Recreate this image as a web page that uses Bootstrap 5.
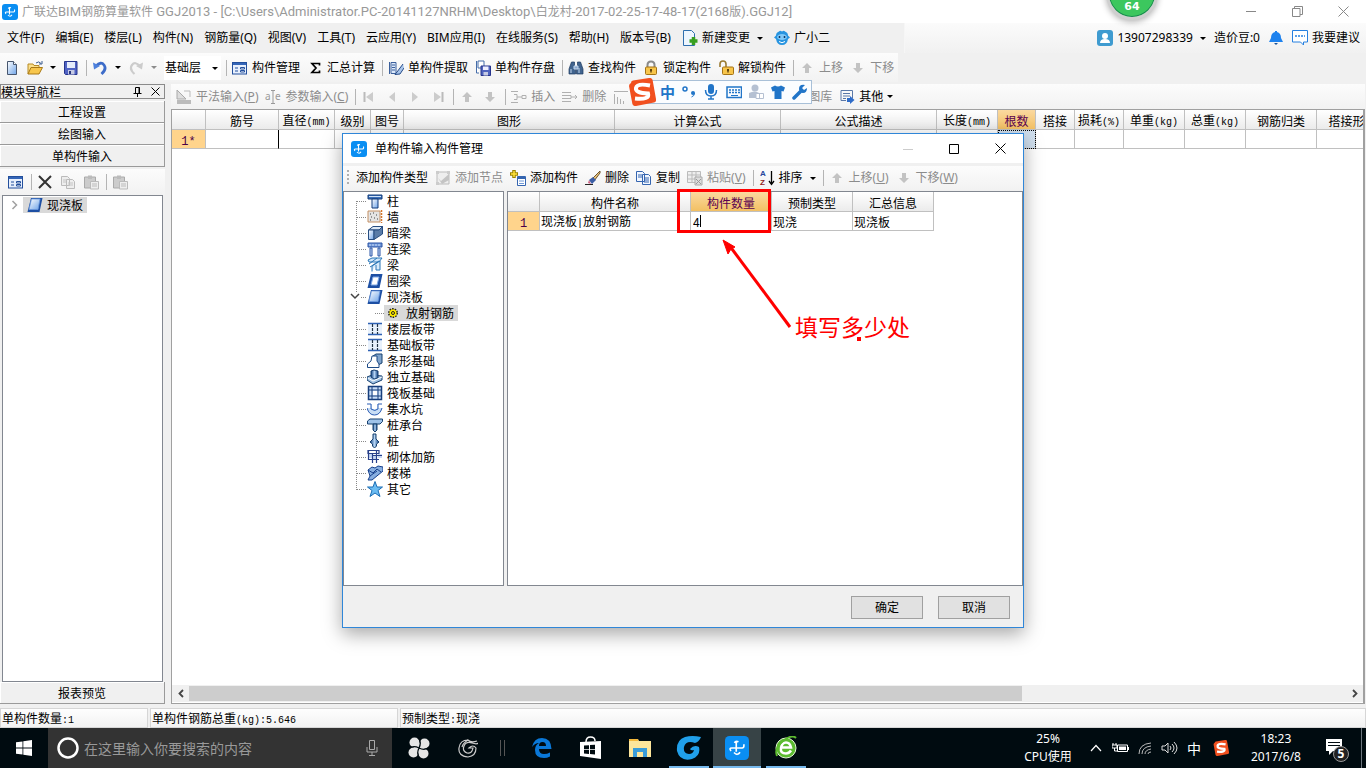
<!DOCTYPE html>
<html lang="zh-CN">
<head>
<meta charset="utf-8">
<meta name="viewport" content="width=device-width, initial-scale=1">
<title>广联达BIM钢筋算量软件 GGJ2013</title>
<link href="https://cdn.jsdelivr.net/npm/bootstrap@5.3.0/dist/css/bootstrap.min.css" rel="stylesheet">
<style>
  body { font: 12px/16px "Noto Sans", "Noto Sans CJK SC", sans-serif; color: #000; background: #f0f0f0; }
  button { font: inherit; color: inherit; line-height: 16px; white-space: nowrap; }
  svg { flex: none; display: block; }
  .i16 { width: 16px; height: 16px; }
  .song { font-family: "Noto Sans CJK SC", sans-serif; }
  .half { font: 10px/12px "Liberation Mono", monospace; }
  .rownum { font: 12px/12px "Liberation Mono", monospace; }
  .tb { display: flex; align-items: center; gap: 4px; border: 0; padding: 0; background: transparent; }
  .tb:disabled { color: #8c8c8c; }
  .caret { width: 0; height: 0; border: 3px solid transparent; border-top-color: currentColor; border-bottom: 0; margin: 0 0 0 3px; }
  .vsep { width: 1px; height: 16px; background: #b4b4b4; margin-right: -2px; flex: none; }
  .toolrow { display: flex; align-items: center; gap: 7px; background: linear-gradient(#fcfcfc, #f2f2f2); }

  .titlebar { height: 23px; background: #fff; color: #999; padding-left: 2px; }
  .titletext { font-size: 12px; line-height: 23px; }
  .titletext span { font: 13px/20px Roboto, sans-serif; }
  .wbtn { width: 46px; height: 23px; border: 0; background: transparent; padding: 0; display: flex; align-items: center; justify-content: center; }
  .menubar { height: 30px; }
  .menus { gap: 11px; padding-left: 7px; }
  .menuright { width: 33.8%; padding-right: 6px; background: linear-gradient(#fbfbfb, #f1f1f1); border-left: 1px solid #f6f6f6; }
  .maintools { height: 29px; }
  .floor { width: 57px; height: 24px; border: 0; border-radius: 0; padding: 0 0 0 1px; font: inherit; appearance: none; background: #fff; }
  .floorwrap { position: relative; margin-right: -2px; }
  .floorwrap .caret { position: absolute; right: 3px; top: 11px; }

  .workarea { min-height: 0; padding-top: 2px; }
  .leftpane { width: 169px; flex: none; }
  .panehead { height: 15px; border: 1px solid #8a8a8a; line-height: 13px; margin-bottom: 2px; }
  .navbtn { display: block; width: 100%; height: 22px; border: 1px solid #9a9a9a; border-width: 0 1px 1px 0; background: #f0f0f0; padding: 0; box-shadow: inset 1px 1px #fff; }
  .panetools { height: 26px; margin-top: 2px; padding-left: 8px; }
  .tree { background: #fff; border: 1px solid #828790; list-style: none; margin: 0; }
  .panetree { margin: 0 2px !important; padding: 1px 0 0 8px; }
  .picked { background: #d9d9d9; }

  .sheetpane { min-width: 0; padding: 0 1px 0 2px; }
  .sheettools { height: 25px; padding-left: 5px; }
  .sheet { border: 1px solid #a0a0a0; border-right-width: 2px; background: #fff; }
  .grid { border-collapse: separate; border-spacing: 0; table-layout: fixed; font-family: "Noto Sans CJK SC", sans-serif; margin: 0; }
  .grid th, .grid td { height: 19px; padding: 0 1px; border-right: 1px solid #c0c0c0; border-bottom: 1px solid #c0c0c0; line-height: 17px; white-space: nowrap; overflow: hidden; font-weight: 400; }
  .grid thead th { height: 20px; padding: 1px 0 0; text-align: center; background: linear-gradient(#fff, #ebebeb); }
  .grid thead th.on { background: linear-gradient(#fbd9a0, #f2c063); color: #5a0050; }
  .grid tbody th { text-align: center; background: #ffd48c; color: #4a0048; }
  .grid td.current { border-right-color: #000; }
  .grid td.focus { outline: 1px dotted #000; outline-offset: -1px; background: #d0dfee; }
  .cellinput { width: 100%; height: 16px; border: 0; padding: 0 1px; font: inherit; display: block; outline: 0; background: linear-gradient(#000, #000) no-repeat 8px 2px / 1px 12px; }
  .hbar { height: 17px; background: #f0f0f0; margin-bottom: 1px; }
  .hbar button { width: 17px; border: 0; background: transparent; padding: 0; display: flex; align-items: center; justify-content: center; }
  .thumb { width: 72%; background: #cdcdcd; height: 15px; }
  .status { gap: 2px; }
  .status > div { height: 20px; border: 1px solid #d6d6d6; background: linear-gradient(#fefefe, #f2f2f2); line-height: 18px; padding-left: 1px; }

  .taskbar { height: 40px; background: #000b10; color: #fff; }
  .taskbar button { border: 0; padding: 0; background: transparent; display: flex; align-items: center; justify-content: center; }
  .tk { width: 49px; height: 40px; }
  .tk.first { width: 48px; margin-left: 3px; }
  .tick { width: 25px; padding-left: 8px; color: #555; }
  .taskbar .live { box-shadow: inset 0 -2px #76b9ed; width: 40px; margin: 0 4px 0 5px; }
  .taskbar .front { background: #374346; box-shadow: inset 0 -2px #76b9ed; width: 48px; margin: 0; }
  .find { width: 344px; background: #333; padding: 0 12px 0 8px; }
  .find input { background: transparent; border: 0; outline: 0; font: 14px/20px "Noto Sans CJK SC", sans-serif; color: #999; padding: 0; min-width: 0; }
  .find input::placeholder { color: #999; opacity: 1; }
  .tray { gap: 8px; }
  .clock { line-height: 18px; text-align: center; }
  .clock.time { margin: 0 24px 0 22px; }
  .imemode { font: 14px/16px "Noto Sans CJK SC", sans-serif; }

  .dlg { position: absolute; left: 50%; top: 133px; width: 682px; height: 495px; margin-left: -341px; background: #f0f0f0; border: 1px solid #2f86d8; box-shadow: 0 6px 18px rgba(0,0,0,.35); }
  .dlgtitle { height: 29px; background: #fff; padding-left: 8px; }
  .dlgtools { height: 24px; margin: 3px 0 1px; padding-left: 4px; }
  .grip { width: 2px; height: 16px; background: repeating-linear-gradient(#b0b0b0 0 2px, transparent 2px 4px); }
  .kinds { width: 161px; padding: 1px 0 0 12px; }
  .kinds li { height: 16px; padding-left: 11px; display: flex; align-items: center; gap: 4px; background: repeating-linear-gradient(#888 0 1px, transparent 1px 2px) no-repeat 0 0 / 1px 16px, repeating-linear-gradient(90deg, #888 0 1px, transparent 1px 2px) no-repeat 1px 8px / 10px 1px; }
  .kinds li:first-child { background-position: 0 8px, 1px 8px; }
  .kinds li:last-child { background-size: 1px 9px, 10px 1px; }
  .kinds li.open { position: relative; }
  .kinds li.open svg.tw { position: absolute; left: -6px; top: 3px; background: #fff; }
  .kinds li.sub { padding-left: 28px; background-position: 0 0, 19px 8px; }
  .kinds li.sub .picked { gap: 6px; }
  .dlgbuttons { height: 41px; gap: 15px; padding: 2px 13px 0 0; }
  .okbtn { width: 72px; height: 23px; border: 1px solid #a0a0a0; background: #e1e1e1; padding: 0; }
  .note { position: absolute; left: 334px; top: 54px; pointer-events: none; }
  .notetext { position: absolute; left: 452px; top: 178px; font: 400 23px/28px "Noto Sans CJK SC", sans-serif; color: #f00; white-space: nowrap; }

  .ime { position: absolute; left: 640px; top: 80px; width: 172px; height: 24px; background: #fbfdff; border: 1px solid #a8c0d8; padding-left: 16px; color: #2175c8; }
  .ime strong { font-size: 15px; }
  .ime .logo { position: absolute; left: -13px; top: -3px; }
  .ball { position: absolute; left: 1106px; top: -32px; width: 52px; height: 52px; border-radius: 50%; background: #3cc75e; border: 3px solid #cfcfcf; box-shadow: inset 0 0 0 1px #16864e, 0 2px 6px rgba(0,0,0,.3); color: #fff; font: bold 11px/14px "DejaVu Sans", sans-serif; text-align: center; padding-top: 29px; }
</style>
</head>
<body class="vh-100 d-flex flex-column overflow-hidden position-relative">
<svg width="0" height="0" class="position-absolute">
  <defs>
    <linearGradient id="bl" x1="0" y1="0" x2="1" y2="1"><stop offset="0" stop-color="#fff"/><stop offset="1" stop-color="#6fa4e8"/></linearGradient>
    <linearGradient id="db" x1="0" y1="0" x2="1" y2="0"><stop offset="0" stop-color="#0e3f80"/><stop offset=".5" stop-color="#b4d4f4"/><stop offset="1" stop-color="#0e3f80"/></linearGradient>
    <symbol id="app" viewBox="0 0 16 16"><rect width="16" height="16" rx="3" fill="#0a8ef2"/><path d="M6.300 4.600Q7 3 9 3.800M7.500 3.500v7M4 10Q2.500 8 4.500 8h7q1.500-.3 1-2.500M6 11q2.300 2.500 4-.2" fill="none" stroke="#fff" stroke-width="1.100"/></symbol>
    <symbol id="new" viewBox="0 0 16 16"><path d="M3.500 1.500h6l3 3v10h-9z" fill="url(#bl)" stroke="#47566e"/><path d="M9.500 1.500v3h3" fill="#fff" stroke="#47566e"/></symbol>
    <symbol id="open" viewBox="0 0 16 16"><path d="M1 14V4h5l1 1.500h5V8" fill="#fbe08c" stroke="#b78a25"/><path d="M1 14l3-6.500h11.500L12 14z" fill="#f7c64c" stroke="#a87917"/><path d="M9 3q3-2.500 5 .5M15 1v3h-3" fill="none" stroke="#3b5c90"/></symbol>
    <symbol id="save" viewBox="0 0 16 16"><path d="M1.500 1.500h12.500v13H2.500l-1-1z" fill="#5063c4" stroke="#26348c"/><path d="M4 2h8v6H4z" fill="#e5ecfb"/><path d="M5 10h6.500v4.500H5z" fill="#c6cbe4"/><path d="M6 11h2v3H6z" fill="#2a377f"/></symbol>
    <symbol id="undo" viewBox="0 0 16 16"><path d="M4 6q5-5 8-1t-2.500 9" fill="none" stroke="#3d6cc9" stroke-width="2.800"/><path d="M1 2.500l1 7 6-3.500z" fill="#4d80dc"/></symbol>
    <symbol id="redo" viewBox="0 0 16 16"><path d="M12 6Q7 1 4 5t2.500 9" fill="none" stroke="#ccc" stroke-width="2.200"/><path d="M15 2.500l-1 7L8 6z" fill="#ccc"/></symbol>
    <symbol id="form" viewBox="0 0 16 16"><rect x=".5" y="2.500" width="14" height="11.500" fill="#e8f0fd" stroke="#234f9c"/><path d="M1 4h13" stroke="#3566b8" stroke-width="2"/><path d="M3 8h3M3 11h3" stroke="#234f9c"/><path d="M8.500 7.500h4v1.500h-4zM8.500 10.500h4V12h-4z" fill="#fff" stroke="#234f9c"/></symbol>
    <symbol id="pick" viewBox="0 0 16 16"><path d="M1.500 2v12M3 2.500h5v11H3z" fill="#dce9fa" stroke="#3b5f9b"/><path d="M4 5h3M4 7.500h3M4 10h3" stroke="#3b5f9b"/><path d="M15 4l-6 8-2 2.500 5-.5 4-6" fill="#a9c5ea" stroke="#254a88"/></symbol>
    <symbol id="store" viewBox="0 0 16 16"><path d="M1.500 1v12H4M3 1h6v7H3z" fill="#fff" stroke="#456da9"/><path d="M6 6h9.500v9.500H6z" fill="#5064bf" stroke="#26348c"/><path d="M8 6.500h5.500V10H8z" fill="#eef"/><path d="M8.500 12h4.500v3.500H8.500z" fill="#c6cbe4"/></symbol>
    <symbol id="binoc" viewBox="0 0 16 16"><path d="M3.500 2h3v4l1 1V14H1V9zM9.500 2h3l2.500 7v5H8.500V7l1-1z" fill="#41648f" stroke="#1d3a60" stroke-width=".7"/><path d="M6 6h4v3H6zM3 9v4M11 8v5" fill="#89a8cf" stroke="#c5d8ee"/></symbol>
    <symbol id="lock" viewBox="0 0 16 16"><path d="M4.500 8V5q0-3.500 3.500-3.500T11.500 5v3" fill="none" stroke="#8b8b8b" stroke-width="2"/><rect x="2.500" y="7" width="11" height="7.500" rx="1" fill="#f8c54a" stroke="#a47315"/><path d="M8 9v3.500M7 10h2" stroke="#53390a" stroke-width="1.300"/></symbol>
    <symbol id="unlock" viewBox="0 0 16 16"><path d="M2 7V4q0-3 3-3t3 3v3" fill="none" stroke="#9a7b33" stroke-width="1.600"/><rect x="4.500" y="7" width="11" height="7.500" rx="1" fill="#f8c54a" stroke="#a47315"/><path d="M10 9v3.500M9 10h2" stroke="#53390a" stroke-width="1.300"/></symbol>
    <symbol id="up" viewBox="0 0 16 16"><path d="M8 3l5 5h-3v5H6V8H3z" fill="#c3c3c3"/></symbol>
    <symbol id="down" viewBox="0 0 16 16"><path d="M8 13L3 8h3V3h4v5h3z" fill="#c3c3c3"/></symbol>
    <symbol id="plate" viewBox="0 0 16 16"><path d="M4 1h11.500L12.500 15H.5z" fill="#1d4fa3"/><path d="M4.500 2h8.500l-2 10.500H2z" fill="url(#bl)" stroke="#6d9be0" stroke-width=".8"/></symbol>
    <symbol id="copyg" viewBox="0 0 16 16"><path d="M1.500 2.500h6l2 2v7h-8zM6.500 5.500h6l2 2v7h-8z" fill="#eee" stroke="#bbb"/><path d="M3 6h4M3 8h3M8 9h5M8 11h5" stroke="#c4c4c4"/></symbol>
    <symbol id="pasteg" viewBox="0 0 16 16"><path d="M1.500 3h11v11h-11z" fill="#ccc" stroke="#aaa"/><path d="M5 1.500h4V5H5z" fill="#bbb"/><path d="M7.500 7.500h8v7.500h-8z" fill="#eee" stroke="#bbb"/><path d="M9 10h5M9 12h5" stroke="#bbb"/></symbol>
    <symbol id="cross" viewBox="0 0 16 16"><path d="M2 2l12 12M14 2L2 14" stroke="#333" stroke-width="2"/></symbol>
    <symbol id="win" viewBox="0 0 16 16"><path d="M0 2.300L6.500 1.400v6.200H0zM7.300 1.300L16 0v7.600H7.300zM0 8.400h6.500v6.200L0 13.700zM7.300 8.400H16V16l-8.700-1.300z" fill="#fff"/></symbol>
    <symbol id="band" viewBox="0 0 16 16"><path d="M1 3h14v10H1z" fill="#e8f1fc"/><path d="M1 2.500h14M1 13.500h14" stroke="#2f62b4" stroke-width="1.500"/><path d="M5.500 3v10M10.500 3v10" stroke="#234" stroke-width="1.200" stroke-dasharray="3 1"/></symbol>
    <symbol id="S" viewBox="0 0 28 28"><path d="M3 5q0-2 2-2.400L21 0q3-.4 3.600 2L28 21q.5 3-2 3.600L8 28q-3 .4-3.600-2L1 8Q1 6 3 5z" fill="#f1501f"/><path d="M22 7.500Q9 5 8 10t12 5.500Q22 22 7 20.500" fill="none" stroke="#fff" stroke-width="4"/></symbol>
  </defs>
</svg>

<header class="titlebar d-flex align-items-center">
  <svg class="i16"><use href="#app"/></svg>
  <div class="titletext ms-1 flex-grow-1 text-nowrap">广联达<span>BIM</span>钢筋算量软件<span> GGJ2013 - [C:\Users\Administrator.PC-20141127NRHM\Desktop\</span>白龙村<span>-2017-02-25-17-48-17(2168</span>版<span>).GGJ12]</span></div>
  <button class="wbtn" aria-label="最小化"><svg width="10" height="10"><path d="M0 4.500h10" stroke="#888"/></svg></button>
  <button class="wbtn" aria-label="还原"><svg width="11" height="11"><path d="M.5 2.500h7.500v8H.5zM2.500 2.500v-2h8v8H8" fill="none" stroke="#888"/></svg></button>
  <button class="wbtn" aria-label="关闭"><svg width="11" height="11"><path d="M.5.5l10 10M10.500.5l-10 10" stroke="#888"/></svg></button>
</header>

<nav class="menubar d-flex">
  <div class="menus d-flex align-items-center flex-grow-1">
    <button class="tb">文件(F)</button><button class="tb">编辑(E)</button><button class="tb">楼层(L)</button><button class="tb">构件(N)</button><button class="tb">钢筋量(Q)</button><button class="tb">视图(V)</button><button class="tb">工具(T)</button><button class="tb">云应用(Y)</button><button class="tb">BIM应用(I)</button><button class="tb">在线服务(S)</button><button class="tb">帮助(H)</button><button class="tb">版本号(B)</button>
    <button class="tb"><svg class="i16"><path d="M1.500.5h8l3 3v12h-11z" fill="#eef6fe" stroke="#2f6fae"/><path d="M11.500 7v8M7.500 11h8" stroke="#38a020" stroke-width="3.500"/></svg>新建变更<span class="caret"></span></button>
    <button class="tb"><svg class="i16"><path d="M8 1.500q2-1.500 3 0 3 1 3 4l2 2-2 1.500q-1 6-6 6T2 9L0 7.500l2-2q0-3 3-4 1-1.500 3 0z" fill="#2794e0"/><ellipse cx="8" cy="7" rx="5" ry="3" fill="#7fc8f8"/><path d="M5.500 6v2M10.500 6v2" stroke="#123a66" stroke-width="1.500"/><path d="M5 11.500q3 2.500 6 0" stroke="#fff" fill="none"/></svg>广小二</button>
  </div>
  <div class="menuright d-flex justify-content-end align-items-center gap-2">
    <button class="tb"><svg class="i16"><rect width="16" height="16" rx="3" fill="#3f9bd0"/><circle cx="8" cy="6" r="3" fill="#fff"/><path d="M3 13q0-4 5-4t5 4z" fill="#fff"/></svg>13907298339<span class="caret"></span></button>
    <button class="tb">造价豆:0</button>
    <button class="tb" aria-label="通知"><svg class="i16"><path d="M7 1h2v1q4 1 4 6l2 4H1l2-4q0-5 4-6z" fill="#1e82ee"/><path d="M6 13h4l-2 2z" fill="#18549e"/></svg></button>
    <button class="tb"><svg class="i16"><path d="M.5.500h15v11.500h-4v3l-3-3h-8z" fill="#fff" stroke="#2680e0"/><path d="M3 6h10" stroke="#2680e0" stroke-width="1.500" stroke-dasharray="2 1"/></svg>我要建议</button>
  </div>
</nav>

<div class="d-flex">
<div class="toolrow maintools ps-1 pe-1">
  <button class="tb" aria-label="新建"><svg class="i16"><use href="#new"/></svg></button>
  <button class="tb" aria-label="打开"><svg class="i16"><use href="#open"/></svg><span class="caret"></span></button>
  <button class="tb" aria-label="保存"><svg class="i16"><use href="#save"/></svg></button>
  <span class="vsep"></span>
  <button class="tb" aria-label="撤销"><svg class="i16"><use href="#undo"/></svg><span class="caret"></span></button>
  <button class="tb" disabled aria-label="恢复"><svg class="i16"><use href="#redo"/></svg><span class="caret"></span></button>
  <span class="floorwrap"><select class="floor" aria-label="楼层"><option>基础层</option></select><span class="caret"></span></span>
  <span class="vsep"></span>
  <button class="tb"><svg class="i16"><use href="#form"/></svg>构件管理</button>
  <button class="tb"><svg class="i16"><path d="M12.500 5.500V3.500H5l4 4.500-4 4.500h7.500v-2" fill="none" stroke="#000" stroke-width="1.700"/></svg>汇总计算</button>
  <span class="vsep"></span>
  <button class="tb"><svg class="i16"><use href="#pick"/></svg>单构件提取</button>
  <button class="tb"><svg class="i16"><use href="#store"/></svg>单构件存盘</button>
  <span class="vsep"></span>
  <button class="tb"><svg class="i16"><use href="#binoc"/></svg>查找构件</button>
  <button class="tb"><svg class="i16"><use href="#lock"/></svg>锁定构件</button>
  <button class="tb"><svg class="i16"><use href="#unlock"/></svg>解锁构件</button>
  <span class="vsep"></span>
  <button class="tb" disabled><svg class="i16"><use href="#up"/></svg>上移</button>
  <button class="tb" disabled><svg class="i16"><use href="#down"/></svg>下移</button>
</div>
</div>

<main class="workarea d-flex flex-grow-1 overflow-hidden">
  <aside class="leftpane d-flex flex-column song pe-1">
    <div class="panehead d-flex align-items-center">
      <span class="flex-grow-1">模块导航栏</span>
      <button class="tb me-2" aria-label="固定"><svg width="10" height="10"><path d="M2.500 6V.5h4V6M6 .5V6M.5 6.500h8M4.500 6.500V10" fill="none" stroke="#000"/></svg></button>
      <button class="tb me-1" aria-label="关闭"><svg width="9" height="9"><path d="M.5.5l8 8M8.500.5l-8 8" stroke="#000"/></svg></button>
    </div>
    <button class="navbtn">工程设置</button>
    <button class="navbtn">绘图输入</button>
    <button class="navbtn">单构件输入</button>
    <div class="toolrow panetools">
      <button class="tb" aria-label="管理"><svg class="i16"><use href="#form"/></svg></button>
      <span class="vsep"></span>
      <button class="tb" aria-label="删除"><svg class="i16"><use href="#cross"/></svg></button>
      <button class="tb" disabled aria-label="复制"><svg class="i16"><use href="#copyg"/></svg></button>
      <button class="tb" disabled aria-label="粘贴"><svg class="i16"><use href="#pasteg"/></svg></button>
      <span class="vsep"></span>
      <button class="tb" disabled aria-label="粘贴全部"><svg class="i16"><use href="#pasteg"/></svg></button>
    </div>
    <ul class="tree panetree flex-grow-1">
      <li class="d-flex align-items-center"><svg width="8" height="10"><path d="M1.500 1l4 4-4 4" fill="none" stroke="#a0a0a0" stroke-width="1.500"/></svg><span class="picked d-flex align-items-center gap-1 ms-1 ps-1 pe-1"><svg class="i16"><use href="#plate"/></svg>现浇板</span></li>
    </ul>
    <button class="navbtn">报表预览</button>
  </aside>

  <section class="sheetpane d-flex flex-column flex-grow-1">
    <div class="toolrow sheettools">
      <button class="tb" disabled><svg class="i16"><path d="M1 1v9h9z" fill="#ddd" stroke="#aaa"/><path d="M1 11h14v4H1z" fill="#bbb"/><path d="M8 2h6v6" fill="none" stroke="#bbb"/></svg><span>平法输入(<u>P</u>)</span></button>
      <button class="tb" disabled><svg class="i16"><text x="0" y="11" font-size="10" fill="#999">a</text><text x="10" y="11" font-size="10" fill="#999">e</text><path d="M6 1.500h4M8 2v12M6 14.500h4" stroke="#999"/></svg><span>参数输入(<u>C</u>)</span></button>
      <span class="vsep"></span>
      <button class="tb" disabled aria-label="首条"><svg class="i16"><path d="M3.500 3v10" stroke="#bbb" stroke-width="2"/><path d="M12 3v10L5 8z" fill="#ccc"/></svg></button>
      <button class="tb" disabled aria-label="上条"><svg class="i16"><path d="M11 3v10L5 8z" fill="#ccc"/></svg></button>
      <button class="tb" disabled aria-label="下条"><svg class="i16"><path d="M5 3v10l6-5z" fill="#ccc"/></svg></button>
      <button class="tb" disabled aria-label="末条"><svg class="i16"><path d="M12.500 3v10" stroke="#bbb" stroke-width="2"/><path d="M4 3v10l7-5z" fill="#ccc"/></svg></button>
      <span class="vsep"></span>
      <button class="tb" disabled aria-label="上移"><svg class="i16"><use href="#up"/></svg></button>
      <button class="tb" disabled aria-label="下移"><svg class="i16"><use href="#down"/></svg></button>
      <span class="vsep"></span>
      <button class="tb" disabled><svg class="i16"><path d="M0 2.500h7M0 13.500h7M3 5.500h3v5H3M6 8h5M11 6.500h4v3h-4z" fill="none" stroke="#b0b0b0"/></svg>插入</button>
      <button class="tb" disabled><svg class="i16"><path d="M0 3.500h9M0 12.500h9M0 6.500h9v3H0M9 8h6M13 6l2 2-2 2" fill="none" stroke="#b0b0b0"/></svg>删除</button>
      <button class="tb" disabled aria-label="缩尺配筋"><svg class="i16"><path d="M1 2.500h14M1.500 5v10M4.500 8v7M7.500 10v5M10.500 12v3" fill="none" stroke="#b0b0b0"/></svg></button>
      <span style="width:165px"></span>
      <button class="tb" disabled>图库</button>
      <button class="tb"><svg class="i16"><path d="M2 1.500h11.500v8M2 1.500v10h5M4 4.500h7M4 7h7M4 9.500h3" fill="none" stroke="#5a78a8"/><path d="M8 9h3V7l4.500 4-4.500 4v-2H8z" fill="#2f6cc8"/></svg>其他<span class="caret m-0"></span></button>
    </div>
    <div class="sheet flex-grow-1 d-flex flex-column overflow-hidden">
      <div class="flex-grow-1 overflow-hidden">
        <table class="grid" style="width:1217px">
          <colgroup><col style="width:34px"><col style="width:73px"><col style="width:56px"><col style="width:36px"><col style="width:33px"><col style="width:211px"><col style="width:166px"><col style="width:156px"><col style="width:61px"><col style="width:38px"><col style="width:39px"><col style="width:49px"><col style="width:61px"><col style="width:61px"><col style="width:71px"><col style="width:72px"></colgroup>
          <thead><tr><th></th><th>筋号</th><th>直径<span class="half">(mm)</span></th><th>级别</th><th>图号</th><th>图形</th><th>计算公式</th><th>公式描述</th><th>长度<span class="half">(mm)</span></th><th class="on">根数</th><th>搭接</th><th>损耗<span class="half">(%)</span></th><th>单重<span class="half">(kg)</span></th><th>总重<span class="half">(kg)</span></th><th>钢筋归类</th><th>搭接形式</th></tr></thead>
          <tbody><tr><th><span class="rownum">1*</span></th><td class="current"></td><td></td><td></td><td></td><td></td><td></td><td></td><td></td><td class="focus"></td><td></td><td></td><td></td><td></td><td></td><td></td></tr></tbody>
        </table>
      </div>
      <div class="hbar d-flex align-items-center">
        <button aria-label="向左"><svg width="8" height="9"><path d="M6 1L2.500 4.500 6 8" fill="none" stroke="#444" stroke-width="1.800"/></svg></button>
        <div class="flex-grow-1"><div class="thumb"></div></div>
        <button aria-label="向右"><svg width="8" height="9"><path d="M2 1l3.500 3.500L2 8" fill="none" stroke="#444" stroke-width="1.800"/></svg></button>
      </div>
    </div>
  </section>
</main>

<footer class="status song d-flex pt-1">
  <div style="width:148px">单构件数量<span class="half">:1</span></div>
  <div style="width:248px">单构件钢筋总重<span class="half">(kg):5.646</span></div>
  <div class="flex-grow-1">预制类型<span class="half">:</span>现浇</div>
</footer>

<div class="taskbar d-flex align-items-stretch">
  <button style="width:48px" aria-label="开始"><svg class="i16"><use href="#win"/></svg></button>
  <div class="find d-flex align-items-center">
    <svg width="24" height="24"><circle cx="12" cy="12" r="9.500" fill="none" stroke="#fff" stroke-width="2.500"/></svg>
    <input class="flex-grow-1 ms-1" type="text" aria-label="搜索" placeholder="在这里输入你要搜索的内容">
    <svg width="16" height="18"><path d="M5.500 1.500h5v9h-5zM3 8v5h10V8M8 13v4M5 16.500h6" fill="none" stroke="#aaa"/></svg>
  </div>
  <button class="tk first" aria-label="浏览器"><svg width="22" height="22"><g fill="#e6e6e6"><circle cx="6.500" cy="5.500" r="5"/><circle cx="16.500" cy="6.500" r="5"/><circle cx="15.500" cy="16.500" r="5"/><circle cx="5.500" cy="15.500" r="5"/><circle cx="11" cy="11" r="5"/></g><path d="M11 11Q14 5 10 0M11 11q6 3 11-1M11 11q-3 6 1 11M11 11q-6-3-11 1" stroke="#000b10" stroke-width="1.300" fill="none"/></svg></button>
  <button class="tk" aria-label="广联达"><svg width="20" height="20"><path d="M19 3Q13 5 10 2 2 2 1 10t9 9q8-1 8-9-3-4-7 0h4q-1 6-6 5-5-2-3-7t8-3 7-1M10 2q-5 3-6 7" fill="none" stroke="#ccc" stroke-width="1.200"/></svg></button>
  <span class="tick align-self-center"><svg width="5" height="16"><path d="M.5 0v16M4.500 0v16" stroke="currentColor"/></svg></span>
  <button class="tk" aria-label="Edge"><svg width="20" height="20"><path d="M0 9Q2 0 10 0q9 0 9.500 11H7q0 5 5 5 3 0 6-1.500v4Q15 20 12 20 3 20 3 12q0-5 4-7Q3 5 0 9zM7 8h7q0-4-3.500-4T7 8z" fill="#0a78d8"/></svg></button>
  <button class="tk" aria-label="应用商店"><svg width="22" height="24"><path d="M0 6l21-1v18L0 20z" fill="#fff"/><path d="M6 6Q6 1 10.500 1T15 5" fill="none" stroke="#fff" stroke-width="1.500"/><path d="M4 9.500l5-.3v4H4zM10 9l5-.3v4.500h-5zM4 14h5v4l-5-.5zM10 14h5v4.600l-5-.5z" fill="#000b10"/></svg></button>
  <button class="tk" aria-label="资源管理器"><svg width="22" height="20"><path d="M0 1h9l1 2h12v16H0z" fill="#fde69b"/><path d="M0 1h9v2H0z" fill="#f4b93c"/><path d="M4 19v-9h14v9h-4v-5H8v5z" fill="#3a9cd8"/></svg></button>
  <button class="tk live" aria-label="广联达云"><svg width="26" height="26"><path d="M25 2q-2 5-6 6-9-3-11 4-1 7 5 7 4 0 5-4-3 1-4-1 4-5 9-2 2 9-7 12-12 3-15-8Q0 5 9 2q7-2 16 0z" fill="#20a0ea"/></svg></button>
  <button class="tk front" aria-label="GGJ2013"><svg width="24" height="24"><use href="#app"/></svg></button>
  <button class="tk live" aria-label="360"><svg width="24" height="24"><circle cx="12" cy="12" r="10" fill="#5cbb30" stroke="#e4f6d8"/><path d="M7 11.500h10q-1-5-5-5t-5 5.500 5 5.500q3 0 5-3" fill="none" stroke="#fff" stroke-width="2.500"/><path d="M3 20Q0 12 9 5T22 2" fill="none" stroke="#5cbb30" stroke-width="2"/></svg></button>
  <div class="flex-grow-1"></div>
  <div class="clock align-self-center me-3">25%<br>CPU使用</div>
  <div class="tray d-flex align-items-center">
    <button aria-label="显示隐藏图标"><svg class="i16"><path d="M3 11l5-5.500 5 5.500" fill="none" stroke="#fff" stroke-width="1.200"/></svg></button>
    <svg width="17" height="16"><path d="M5.500 5h10v6.500h-10z" fill="none" stroke="#fff"/><path d="M7 6.500h7v3.500H7zM16 7h1v3h-1z" fill="#fff"/><path d="M1 3v2M4 3v2M0 5h5v3H0zM2.500 8v3h3" stroke="#fff" fill="none"/></svg>
    <svg class="i16"><g fill="none" stroke="#bbb"><path d="M2 14Q2 4 14 3M5 14Q5 7 14 6M8 14q0-4 6-5M11 14q0-2 3-2"/></g></svg>
    <svg width="18" height="16"><path d="M1 6h3l3-3v10l-3-3H1zM9 6q2 2 0 4M11 4q4 4 0 8M13 2q6 6 0 12" fill="none" stroke="#ddd"/></svg>
    <span class="imemode">中</span>
    <svg class="ms-1 i16"><use href="#S"/></svg>
  </div>
  <div class="clock time align-self-center">18:23<br>2017/6/8</div>
  <button class="me-2" aria-label="通知" style="width:28px"><svg width="28" height="28" class="mt-1"><path d="M1 3h16v12H8l-4 4v-4H1z" fill="#fff"/><path d="M3 6.500h12M3 9.500h12" stroke="#000b10"/><circle cx="16" cy="18" r="7.500" fill="#222" stroke="#999"/><text x="16" y="22" fill="#fff" font-size="12" font-weight="700" text-anchor="middle">5</text></svg></button>
  <div class="border-start border-secondary" style="width:5px"></div>
</div>

<div class="dlg d-flex flex-column" role="dialog" aria-label="单构件输入构件管理">
  <div class="dlgtitle d-flex align-items-center">
    <svg class="i16"><use href="#app"/></svg><span class="ms-1 ps-1 flex-grow-1">单构件输入构件管理</span>
    <button class="wbtn" aria-label="最小化"><svg width="10" height="10"><path d="M0 5.500h10" stroke="#ccc"/></svg></button>
    <button class="wbtn" aria-label="最大化"><svg width="10" height="10"><path d="M.5.500h9v9h-9z" fill="none" stroke="#000"/></svg></button>
    <button class="wbtn" aria-label="关闭"><svg width="11" height="11"><path d="M.5.5l10 10M10.500.5l-10 10" stroke="#000"/></svg></button>
  </div>
  <div class="toolrow dlgtools">
    <span class="grip"></span>
    <button class="tb">添加构件类型</button>
    <button class="tb" disabled><svg class="i16"><path d="M2 2h12v12H2z" fill="#eee" stroke="#bbb"/><path d="M3 8l3 3 8-7v6l-7 4z" fill="#c4c4c4"/><path d="M1 1h3v3H1zM12 1h3v3h-3zM1 12h3v3H1z" fill="#ccc"/></svg>添加节点</button>
    <button class="tb"><svg class="i16"><path d="M4 0v8M0 4h8" stroke="#9a8300" stroke-width="3.500"/><path d="M4 1v6M1 4h6" stroke="#ffe23b" stroke-width="1.500"/><path d="M7.500 6.500h8v9h-8z" fill="#fff" stroke="#3565b0"/><path d="M8 8h7" stroke="#3565b0" stroke-width="2"/><path d="M9 11h5M9 13.500h5" stroke="#6f99d8"/></svg>添加构件</button>
    <button class="tb"><svg class="i16"><path d="M15 1L7 9l2 2 6-8z" fill="#e9c27a" stroke="#6d542b"/><path d="M8 7L4 10l3 4 4-4z" fill="#3c5ea5"/><path d="M4 10l-1 3 3 1z" fill="#d06080"/><path d="M0 14.500h8" stroke="#222"/></svg>删除</button>
    <button class="tb"><svg class="i16"><path d="M.5 1.500h6l2 2v8h-8zM6.500 4.500h6l2 2v8h-8z" fill="#f2f7ff" stroke="#3565b0"/><path d="M2 5h4M2 7h4M8 8h5M8 10h5M8 12h5" stroke="#3565b0"/></svg>复制</button>
    <button class="tb" disabled><svg class="i16"><path d="M.5 1.500h13v11H.5zM.5 5h13M.5 9h13M5 1v11M9 1v11" fill="#eee" stroke="#bbb"/><path d="M8 7h7v8H8z" fill="#ddd" stroke="#aaa"/><path d="M9 9l5 5M14 9l-5 5" stroke="#999"/></svg><span>粘贴(<u>V</u>)</span></button>
    <span class="vsep"></span>
    <button class="tb"><svg class="i16 overflow-visible" font-family="Liberation Sans, sans-serif" font-size="8" font-weight="700"><text x="1" y="6" fill="#26479b">A</text><text x="1" y="15" fill="#8e2222">Z</text><path d="M12.500 1v12M10 11l2.500 3.500L15 11" fill="none" stroke="#000" stroke-width="1.300"/></svg>排序<span class="caret"></span></button>
    <span class="vsep"></span>
    <button class="tb" disabled><svg class="i16"><use href="#up"/></svg><span>上移(<u>U</u>)</span></button>
    <button class="tb" disabled><svg class="i16"><use href="#down"/></svg><span>下移(<u>W</u>)</span></button>
  </div>
  <div class="d-flex flex-grow-1 song" style="gap:3px">
    <ul class="tree kinds">
      <li><svg class="i16"><path d="M1 2h14v4H1z" fill="#3b6fb8" stroke="#123c7a"/><path d="M2 3.500h12" stroke="#cfe2f8"/><path d="M5 6h6v9H5z" fill="url(#bl)" stroke="#123c7a"/></svg>柱</li>
      <li><svg class="i16"><path d="M1 2h12v11H1z" fill="#e4e4e4" stroke="#c49064"/><path d="M3 5h1M6 4h1M9 6h1M4 8h1M7 9h1M10 10h1M3 11h1" stroke="#444"/><path d="M14.500 1v13" stroke="#d2762a" stroke-width="1.500" stroke-dasharray="2 1"/></svg>墙</li>
      <li><svg class="i16"><path d="M1.500 5L6 1.500h9.500L12 5z" fill="#dce8f5" stroke="#274d80"/><path d="M1.500 5H7v9.500H1.500z" fill="url(#bl)" stroke="#274d80"/><path d="M7 5h5l3.500-3.500V9L7 14.500z" fill="#5a7ca8" stroke="#274d80"/></svg>暗梁</li>
      <li><svg class="i16"><path d="M1 2h14v4H1z" fill="#7096d8" stroke="#2b55a6"/><path d="M2 4h12" stroke="#c8dcf8" stroke-dasharray="2 1"/><path d="M3 7h2v8H3zM11 7h2v8h-2z" fill="#cfe0f8" stroke="#2b55a6"/></svg>连梁</li>
      <li><svg class="i16"><path d="M1 3l4-2h10l-3 4H2z" fill="#cfe6fa" stroke="#2b77b6"/><path d="M5 14.500V9L13 4v9H9V8" fill="#d8ebfb" stroke="#2b77b6"/><path d="M2 7l8-6M3 10l9-6" stroke="#2b77b6"/></svg>梁</li>
      <li><svg class="i16"><path d="M4 1h11.500L12.500 15H.5z" fill="#1d4fa3"/><path d="M6 4h6l-2 8H4z" fill="#fff" stroke="#7fa8e4"/></svg>圈梁</li>
      <li class="open"><svg class="tw" width="10" height="9"><path d="M1 2l4 4 4-4" fill="none" stroke="#444" stroke-width="1.500"/></svg><svg class="i16"><use href="#plate"/></svg>现浇板</li>
      <li class="sub"><span class="picked d-flex align-items-center pe-1"><svg class="i16"><circle cx="9" cy="8" r="4" fill="#ffea00" stroke="#222" stroke-width="2" stroke-dasharray="1.500 1"/><circle cx="9" cy="8" r="3.500" fill="#ffea00"/><circle cx="9" cy="8" r="1.500" fill="#ffea00" stroke="#222"/></svg>放射钢筋</span></li>
      <li><svg class="i16"><use href="#band"/></svg>楼层板带</li>
      <li><svg class="i16"><use href="#band"/></svg>基础板带</li>
      <li><svg class="i16"><path d="M6 3l3-2h6v9l-4 2z" fill="#7fa3cc" stroke="#17406f"/><path d="M5 3h5v5l2 3v3.500H.500V11L4 8z" fill="#fff" stroke="#1d4a86"/></svg>条形基础</li>
      <li><svg class="i16"><path d="M0 8l5-2 10 1v4l-9 4-6-4z" fill="#9ec0e2" stroke="#17406f"/><path d="M4 2l3-1 4 1v7l-4 1-3-2z" fill="url(#db)" stroke="#17406f"/><path d="M1 9l5 3 9-4" fill="none" stroke="#fff"/></svg>独立基础</li>
      <li><svg class="i16"><path d="M1.500 1.500h13v13h-13z" fill="#c9def8" stroke="#173e7c" stroke-width="1.500"/><path d="M5 2v12M11 2v12M2 5h12M2 11h12" stroke="#173e7c"/><path d="M6 6h4v4H6z" fill="#fff"/></svg>筏板基础</li>
      <li><svg class="i16"><path d="M0 3h4v5q4 3 7 0V3h4M0 7q2 7 7.500 7T15 7" fill="#c9def5" stroke="#2a5cb4"/><path d="M5 2h5v5.500q-3 1-5 0z" fill="#fff"/></svg>集水坑</li>
      <li><svg class="i16"><path d="M.5 4L3 2h12.500v2.500L13 7H.500z" fill="#9fc3ea" stroke="#17406f"/><path d="M6 7h4v6l-2 2-2-2z" fill="url(#db)" stroke="#17406f"/></svg>桩承台</li>
      <li><svg class="i16"><path d="M6 1h3v5l3 3-2.500 2v2L7.500 15 5.500 13v-2L3 9l3-3z" fill="url(#db)" stroke="#17406f"/></svg>桩</li>
      <li><svg class="i16"><path d="M1 4h4v5H1zM6 6h4v4H6zM11 5h4v4h-4z" fill="#c7d8f4"/><path d="M1 1.500h11v3H1zM1 10.500h11M5.500 4v10M9.500 1v13M5 6.500h10M1.500 1v10" fill="none" stroke="#28408a" stroke-width="1.200"/></svg>砌体加筋</li>
      <li><svg class="i16"><path d="M1 5l4-3 3 1 3-2 5 1v4L5 15H1l2-4z" fill="#87aee0" stroke="#17408c"/><path d="M1 5l5 3 4-4 4 3M3 11l7-5" fill="none" stroke="#17408c"/></svg>楼梯</li>
      <li><svg class="i16"><path d="M8 .500l2 5.500h5.500L11 9.500l2 6L8 12l-5 3.500 2-6L.500 6H6z" fill="#6bbcf2" stroke="#1b6cb4"/></svg>其它</li>
    </ul>
    <div class="tree flex-grow-1">
      <table class="grid" style="width:426px">
        <colgroup><col style="width:32px"><col style="width:151px"><col style="width:81px"><col style="width:81px"><col style="width:81px"></colgroup>
        <thead><tr><th></th><th>构件名称</th><th class="on">构件数量</th><th>预制类型</th><th>汇总信息</th></tr></thead>
        <tbody><tr><th><span class="rownum">1</span></th><td>现浇板<span class="half">|</span>放射钢筋</td><td><input class="cellinput" type="text" value="4" aria-label="构件数量"></td><td>现浇</td><td>现浇板</td></tr></tbody>
      </table>
    </div>
  </div>
  <div class="dlgbuttons d-flex justify-content-end align-items-center">
    <button class="okbtn">确定</button><button class="okbtn">取消</button>
  </div>
  <svg class="note" width="190" height="160"><path d="M1.500 2.500h91v41h-91z" fill="none" stroke="#f00" stroke-width="3"/><path d="M113 139L52 57" stroke="#f00" stroke-width="3"/><path d="M46 52l12 7-4 2-3 5z" fill="#f00" stroke="#f00"/><path d="M180 149h4v4h-4z" fill="#f00"/></svg>
  <span class="notetext">填写多少处</span>
</div>

<div class="ime d-flex align-items-center justify-content-around">
  <svg class="logo" width="28" height="28"><use href="#S"/></svg>
  <strong class="song">中</strong>
  <svg class="i16"><circle cx="4" cy="5" r="2" fill="none" stroke="currentColor" stroke-width="1.500"/><circle cx="12" cy="9" r="2" fill="currentColor"/><path d="M13.500 9q0 3-3 4" stroke="currentColor" fill="none"/></svg>
  <svg class="i16"><rect x="5" y="0" width="6" height="10" rx="3" fill="currentColor"/><path d="M2.500 6q0 6 5.500 6t5.500-6M8 12v3M5 15h6" fill="none" stroke="currentColor" stroke-width="1.500"/></svg>
  <svg class="i16"><rect x="1" y="3" width="14.500" height="10.500" fill="none" stroke="currentColor" stroke-width="1.500"/><path d="M3 6h11M3 8.500h11" stroke="currentColor" stroke-dasharray="2 1" stroke-width="1.500"/><path d="M5 11.500h7" stroke="currentColor"/></svg>
  <svg class="i16"><circle cx="7" cy="4" r="3.500" fill="#b4c0d2"/><path d="M1 14V9q6-3 10 0v5z" fill="#b4c0d2"/><path d="M8 9.500h7.500v5H8zM11.500 10v4" fill="#fff" stroke="#b4c0d2"/></svg>
  <svg class="i16"><path d="M5 1.500q3 2 6 0l4 2-1.500 4-2-.5v8h-7V7l-2 .500L1 3.500z" fill="currentColor"/></svg>
  <svg class="i16"><path d="M2 14l6-6" stroke="currentColor" stroke-width="3.500" stroke-linecap="round"/><path d="M13 1Q7 0 7 5q0 4 4 4t4-5l-3 2-2-2z" fill="currentColor"/></svg>
</div>
<div class="ball">64</div>
<script src="https://cdn.jsdelivr.net/npm/bootstrap@5.3.0/dist/js/bootstrap.bundle.min.js"></script>
</body>
</html>
